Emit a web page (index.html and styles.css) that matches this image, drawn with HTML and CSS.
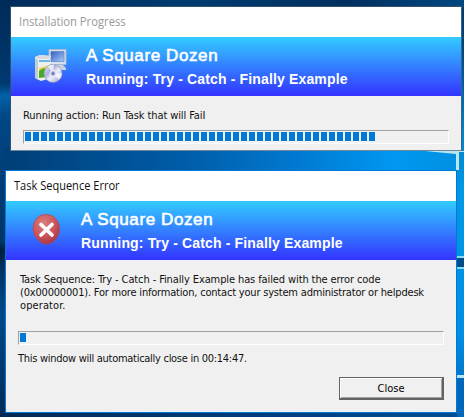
FILE: index.html
```html
<!DOCTYPE html>
<html lang="en">
<head>
<meta charset="utf-8">
<title>Task Sequence Error</title>
<link rel="stylesheet" href="styles.css">
</head>
<body>
<svg class="wallpaper" viewBox="0 0 464 417" aria-hidden="true">
  <defs>
    <linearGradient id="left" x2="0" y2="1"><stop offset="0" stop-color="#002a58"/><stop offset=".2" stop-color="#003a70"/><stop offset=".23" stop-color="#0062a8"/><stop offset=".28" stop-color="#004785"/><stop offset=".58" stop-color="#003568"/><stop offset=".6" stop-color="#001d3e"/><stop offset=".64" stop-color="#00305f"/><stop offset=".75" stop-color="#00498a"/><stop offset="1" stop-color="#002a55"/></linearGradient>
    <linearGradient id="mid"><stop offset="0" stop-color="#003e76"/><stop offset=".4" stop-color="#005da9"/><stop offset=".65" stop-color="#007bd3"/><stop offset=".85" stop-color="#0098f2"/><stop offset="1" stop-color="#008fdf"/></linearGradient>
    <linearGradient id="right" x2="0" y2="1"><stop offset="0" stop-color="#003c70"/><stop offset=".1" stop-color="#00477f"/><stop offset=".3" stop-color="#0081c8"/><stop offset=".45" stop-color="#0099e6"/><stop offset=".8" stop-color="#008ee4"/><stop offset="1" stop-color="#0060b0"/></linearGradient>
    <linearGradient id="top"><stop offset="0" stop-color="#002b58"/><stop offset=".4" stop-color="#003b70"/><stop offset=".75" stop-color="#00305f"/><stop offset="1" stop-color="#004780"/></linearGradient>
    <linearGradient id="bottom"><stop offset="0" stop-color="#002a55"/><stop offset=".5" stop-color="#003c78"/><stop offset="1" stop-color="#004d92"/></linearGradient>
  </defs>
  <path fill="url(#left)" d="M0 0h12v417H0z"/>
  <path fill="url(#top)" d="M0 0h464v8H0z"/>
  <path fill="url(#mid)" d="M5 148h459v25H5z"/>
  <path fill="url(#right)" d="M456 8h8v409h-8z"/>
  <path fill="url(#bottom)" d="M5 412h459v5H5z"/>
  <path fill="#b8e8ee" d="M425 151h39v1h-5v18h-3v-16z"/>
  <path fill="#8bdcf0" d="M457 256h7v2h-7zM457 267h7v2h-7z"/>
  <path fill="#004d8a" d="M457 258h7v9h-7z"/>
  <path fill="#0068b8" d="M457 375h7v42h-7z"/>
  <path fill="#b5e5f5" d="M457 375h7v3h-7z"/>
</svg>
<main class="desktop">
  <section class="window progress-window">
    <header class="titlebar"><span class="t-install">Installation Progress</span></header>
    <div class="banner">
      <svg class="icon" viewBox="0 0 34 36">
        <defs>
          <linearGradient id="screen" x2="1" y2="1"><stop stop-color="#315fc0"/><stop offset="1" stop-color="#a8cdf8"/></linearGradient>
          <linearGradient id="disc" x2="1" y2="1"><stop stop-color="#f4f5ff"/><stop offset=".35" stop-color="#aab3dc"/><stop offset=".55" stop-color="#eeeefa"/><stop offset="1" stop-color="#9298c9"/></linearGradient>
        </defs>
        <path d="M15 1.500h17v15H15z" fill="#d9e2ee" stroke="#a8b8d2"/>
        <path d="M17 3.500h13v10H17z" fill="url(#screen)" stroke="#4d74b8" stroke-width=".6"/>
        <path d="M19 17h10l3 3v2H18z" fill="#c6d0df"/>
        <path d="M1 9l5-2 11 1-1 2 1 20-10 3-6-3z" fill="#eef1ee"/>
        <path d="M1 9l5-2 11 1-2 3H4z" fill="#d8dadd"/>
        <path d="M5 12h11v2H5z" fill="#6bb6e8"/>
        <path d="M1 10l3 2v20l-3-3z" fill="#c4cbd3"/>
        <path d="M5 20l11-3v8H5z" fill="#f5cf54"/>
        <path d="M5 23q5-5 8-1v7l-8 1z" fill="#45ac25"/>
        <circle cx="19" cy="25.500" r="9" fill="url(#disc)" stroke="#8b91c3" stroke-width=".6"/>
        <path d="M19 25.500l-5-7q3-2 6-2zM19 25.500l6 6q3-3 3-6z" fill="#fff" opacity=".7"/>
        <circle cx="19" cy="25.500" r="3" fill="#aeb3db" stroke="#f5f5ff"/>
        <circle cx="19" cy="25.500" r="1.200" fill="#6571c0"/>
      </svg>
      <div class="heading"><h1><span>A Square Dozen</span></h1><h2><span>Running: Try - Catch - Finally Example</span></h2></div>
    </div>
    <div class="content">
      <p><span class="t-action">Running action: Run Task that will FaiI</span></p>
      <div class="bar"><i class="fill" style="width:350px"></i></div>
    </div>
  </section>
  <section class="window error-window">
    <header class="titlebar"><span class="t-error">Task Sequence Error</span></header>
    <div class="banner">
      <svg class="icon" viewBox="0 0 34 36">
        <defs><radialGradient id="red" cx=".4" cy=".3" r=".75"><stop stop-color="#dc8080"/><stop offset=".65" stop-color="#c84f55"/><stop offset="1" stop-color="#9c3448"/></radialGradient></defs>
        <path d="M11 3.500Q17 1.500 23 3.500Q30 8 30.500 16Q31 24 24 30Q18 34 12 30.500Q5 26 4 17Q4 8 11 3.500z" fill="url(#red)" stroke="#b34757" stroke-width=".7"/>
        <path d="M12 12.500l11 10.500M23 12.500l-11 10.500" stroke="#fff" stroke-width="3.700" stroke-linecap="round"/>
      </svg>
      <div class="heading"><h1><span>A Square Dozen</span></h1><h2><span>Running: Try - Catch - Finally Example</span></h2></div>
    </div>
    <div class="content">
      <p><span class="t-l1">Task Sequence: Try - Catch - Finally Example has failed with the error code</span></p>
      <p><span class="t-l2">(0x00000001). For more information, contact your system administrator or helpdesk</span></p>
      <p><span class="t-l3">operator.</span></p>
      <div class="bar"><i class="fill" style="width:6px"></i></div>
      <p class="countdown"><span class="t-count">This window will automatically close in 00:14:47.</span></p>
      <button><span>Close</span></button>
    </div>
  </section>
</main>
</body>
</html>
```
FILE: styles.css
```css
* { box-sizing: border-box; }
body { margin: 0; width: 464px; height: 417px; overflow: hidden; background: #003a70; color: #111; }
.wallpaper { position: absolute; inset: 0; width: 464px; height: 417px; }
.desktop { position: relative; padding-top: 6px; }
.window { width: 452px; border: 1px solid #0078d7; background: #f0f0f0; }
.progress-window { height: 145px; margin-left: 10px; border-color: #31516f #3c6489 #718799 #31516f; }
.error-window { height: 243px; margin: 19px 0 0 5px; }
.titlebar { height: 30px; background: #fff; padding-left: 8px; font: 12px/30px "Open Sans", "Noto Sans", sans-serif; white-space: nowrap; }
.titlebar span { display: inline-block; transform-origin: 0 50%; }
.t-install { transform: scaleX(.935); }
.t-error { transform: scaleX(.92); }
.progress-window .titlebar { color: #999; }
.banner { height: 59px; display: flex; padding: 11px 0 0 23px; background: linear-gradient(#33ccff, #3333ff); color: #fff; }
.icon { width: 34px; height: 36px; flex: none; }
.heading { margin-left: 18px; white-space: nowrap; }
h1, h2, p { margin: 0; }
h1 { font: 17px/18px "Liberation Sans", sans-serif; margin-top: -1px; -webkit-text-stroke: .6px #fff; }
h2 { font: bold 14px/16px "Liberation Sans", sans-serif; margin-top: 6px; }
h1 span { letter-spacing: .6px; }
h2 span { letter-spacing: .15px; }
.content { display: flex; flex-direction: column; padding: 13px 12px 0; font: 11px/13px "DejaVu Sans Condensed", "DejaVu Sans", sans-serif; }
p { height: 13px; white-space: nowrap; }
.t-action { letter-spacing: -.1px; }
.t-l1 { letter-spacing: -.107px; }
.t-l2 { letter-spacing: -.195px; }
.t-l3 { letter-spacing: .1px; }
.t-count { letter-spacing: -.28px; }
.bar { height: 14px; width: 426px; border: 1px solid; border-color: #a0a0a0 #fff #fff #a0a0a0; padding: 1px; margin-top: 8px; }
.fill { display: block; height: 9px; background: repeating-linear-gradient(90deg, #0078d7 0 6px, #f0f0f0 6px 8px); }
.error-window p:not(.countdown) { padding-left: 2px; }
.error-window .bar { margin-top: 19px; }
.countdown { margin-top: 7px; }
button { width: 105px; height: 23px; margin: 12px 0 0 321px; padding: 0; border: 1px solid #646464; border-right-width: 2px; border-bottom-width: 2px; box-shadow: inset 1px 1px #fff, inset -1px -1px #a0a0a0; background: #f0f0f0; color: #000; font: inherit; }
```
